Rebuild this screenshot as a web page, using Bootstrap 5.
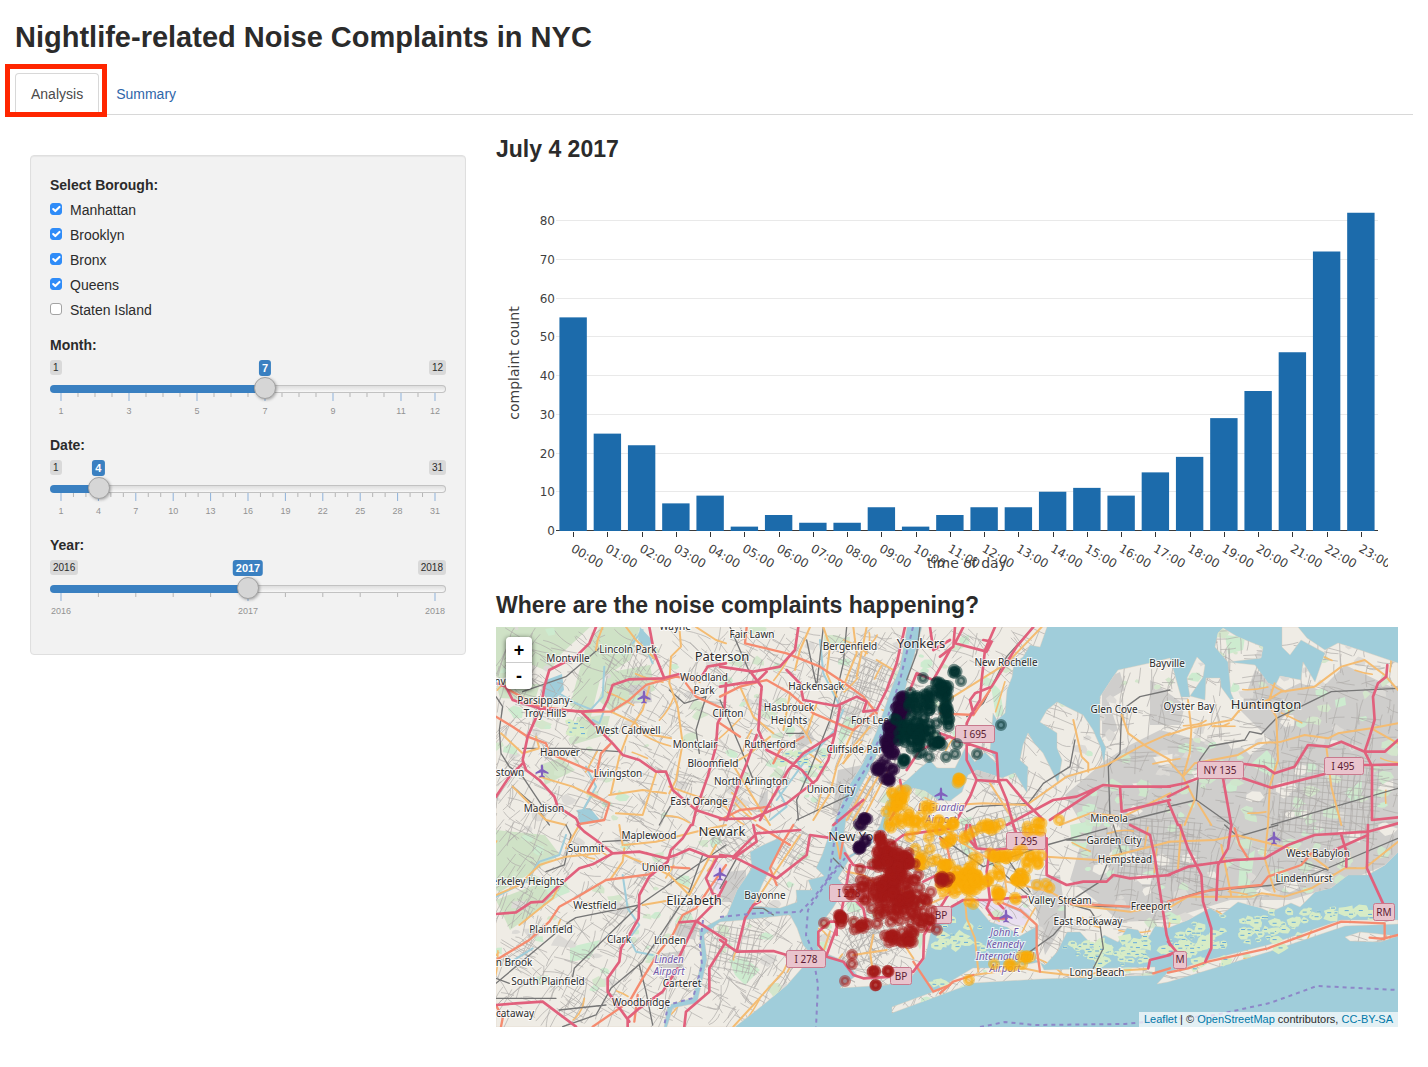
<!DOCTYPE html>
<html lang="en">
<head>
<meta charset="utf-8">
<meta name="viewport" content="width=device-width, initial-scale=1">
<title>Nightlife-related Noise Complaints in NYC</title>
<link href="https://cdn.jsdelivr.net/npm/bootstrap@5.3.0/dist/css/bootstrap.min.css" rel="stylesheet">
<style>
  :root { --ink:#2b2b2b; --brand:#3a80c1; --link:#2f66a9; }
  body { font-family:"Liberation Sans",Arial,sans-serif; font-size:14px; line-height:20px; color:var(--ink); }
  .page, .page .row, .page .inner { --bs-gutter-x:30px; }
  h1 { font-size:29px; line-height:33px; font-weight:700; margin:21px 0 19px; }
  h2 { font-size:23px; line-height:28px; font-weight:700; margin:20px 0 8px; }
  .nav-tabs { --bs-nav-tabs-border-color:#d8d8d8; --bs-nav-tabs-border-radius:4px; --bs-nav-tabs-link-active-color:#4a4a4a; --bs-nav-tabs-link-active-border-color:#d8d8d8 #d8d8d8 #fff; --bs-nav-link-padding-x:15px; --bs-nav-link-padding-y:10px; --bs-nav-link-color:var(--link); gap:1px; }
  .highlighted::after { content:""; position:absolute; inset:-9px -8px -3px -10px; border:5px solid #ff2600; pointer-events:none; z-index:2; }
  .well { background:#f2f2f2; border:1px solid #dfdfdf; border-radius:4px; padding:19px; margin-top:40px; box-shadow:inset 0 1px 1px rgba(0,0,0,.05); }
  .boroughs { margin-bottom:15px; }
  .group-title { display:block; font-weight:700; font-size:14px; line-height:20px; margin:0 0 5px; float:none; }
  .borough { min-height:20px; padding-left:20px; margin:0 0 5px; }
  .borough .form-check-input { width:12px; height:12px; margin:3px 0 0 -20px; border-color:#a3a3a3; border-radius:3px; }
  .borough .form-check-input:checked { background-color:#2f8cf8; border-color:#2f8cf8; background-size:14px; }
  .slider { margin-bottom:15px; height:60px; }
  .bounds { position:relative; height:17px; font-size:10px; line-height:15px; }
  .bounds span { background:#d9d9d9; border-radius:3px; padding:0 3px; height:15px; }
  .bounds output { position:absolute; top:0; left:calc(11px + (100% - 22px) * var(--at)); transform:translateX(-50%); background:var(--brand); color:#fff; font-weight:700; font-size:11px; line-height:16px; padding:0 3px; border-radius:3px; }
  .slider input { -webkit-appearance:none; appearance:none; display:block; position:relative; z-index:1; width:100%; height:24px; margin:0; background:none; }
  .slider input::-webkit-slider-runnable-track { height:8px; border:1px solid transparent; border-radius:8px; background:linear-gradient(var(--brand),var(--brand)) 0 0/calc(11px + (100% - 22px) * var(--at)) 100% no-repeat border-box, linear-gradient(#dedede,#f8f8f8) padding-box, linear-gradient(#c2c2c2,#c2c2c2) border-box; }
  .slider input::-webkit-slider-thumb { -webkit-appearance:none; width:22px; height:22px; margin-top:-9px; border:1px solid #a2a2a2; border-radius:50%; background:#d6d6d6; box-shadow:1px 1px 3px rgba(0,0,0,.3); }
  .ticks { display:block; width:calc(100% - 22px); height:27px; margin:-8px 11px 0; overflow:visible; font-size:9px; fill:#929292; }
  .chart { display:block; width:calc(100% - 10px); height:400px; font-family:"DejaVu Sans",Verdana,sans-serif; font-size:12px; fill:#3f3f3f; }
  .mapbox { position:relative; height:400px; overflow:hidden; background:#a0cdda; }
  .mapbox > svg { display:block; width:100%; height:100%; font-family:"Noto Sans",sans-serif; }
  .zoomer { position:absolute; top:10px; left:10px; width:26px; border-radius:4px; box-shadow:0 1px 5px rgba(0,0,0,.65); overflow:hidden; }
  .zoomer button { width:26px; height:26px; padding:0; border:0; border-radius:0; background:#fff; color:#000; font-size:18px; font-weight:700; line-height:26px; }
  .zoomer button:first-child { border-bottom:1px solid #ccc; }
  .credit { position:absolute; right:0; bottom:0; padding:0 5px; font-size:11px; line-height:15px; background:rgba(255,255,255,.7); }
  .credit a { color:#0078a8; text-decoration:none; }
  .land { fill:#efece5; stroke:#dccdb8; stroke-width:.4; }
  .urban { fill:#cfcecc; } .wood { fill:#cfe2c6; } .park { fill:#cdebcf; } .water { fill:#a0cdda; }
  .river, .mw, .tr, .pr, .rl, .minor { fill:none; stroke-linejoin:round; stroke-linecap:round; }
  .river { stroke:#a0cdda; stroke-width:6; } .mw { stroke:#e1607c; stroke-width:8; } .tr { stroke:#f58b6f; stroke-width:7; }
  .pr { stroke:#f4bc72; stroke-width:6; } .rl { stroke:#767676; stroke-width:4; } .minor { stroke:#b0adab; stroke-width:.7; }
  .town text, .air text { font-size:10px; text-anchor:middle; fill:#2c2c2c; paint-order:stroke; stroke:#fff; stroke-opacity:.75; stroke-width:2px; }
  .town .city { font-size:13px; }
  .air text { fill:#7058a8; font-style:italic; }
  .shield rect { fill:#e9c4cd; stroke:#c8798d; } .shield text { font-size:10px; text-anchor:middle; fill:#5c1c33; }
  .ferry { fill:none; stroke:#8d87c8; stroke-width:2; stroke-dasharray:4 4; }
</style>
</head>
<body>
<div class="container-fluid page">
  <h1>Nightlife-related Noise Complaints in NYC</h1>
  <ul class="nav nav-tabs">
    <li class="nav-item position-relative highlighted"><a class="nav-link active" aria-current="page" href="#analysis">Analysis</a></li>
    <li class="nav-item"><a class="nav-link" href="#summary">Summary</a></li>
  </ul>
  <main class="container-fluid inner" id="analysis">
    <div class="row">
      <div class="col-4">
        <form class="well">
          <fieldset class="boroughs">
            <legend class="group-title">Select Borough:</legend>
            <div class="form-check borough"><input class="form-check-input" type="checkbox" id="b1" checked><label for="b1">Manhattan</label></div>
            <div class="form-check borough"><input class="form-check-input" type="checkbox" id="b2" checked><label for="b2">Brooklyn</label></div>
            <div class="form-check borough"><input class="form-check-input" type="checkbox" id="b3" checked><label for="b3">Bronx</label></div>
            <div class="form-check borough"><input class="form-check-input" type="checkbox" id="b4" checked><label for="b4">Queens</label></div>
            <div class="form-check borough mb-0"><input class="form-check-input" type="checkbox" id="b5"><label for="b5">Staten Island</label></div>
          </fieldset>
          <label class="group-title" for="month">Month:</label>
          <div class="slider" data-major="1,3,5,7,9,11,12" data-minor="0.5">
            <div class="bounds d-flex justify-content-between"><span>1</span><span>12</span><output for="month">7</output></div>
            <input type="range" id="month" min="1" max="12" value="7"><svg class="ticks"></svg>
          </div>
          <label class="group-title" for="day">Date:</label>
          <div class="slider" data-major="1,4,7,10,13,16,19,22,25,28,31" data-minor="1">
            <div class="bounds d-flex justify-content-between"><span>1</span><span>31</span><output for="day">4</output></div>
            <input type="range" id="day" min="1" max="31" value="4"><svg class="ticks"></svg>
          </div>
          <label class="group-title" for="year">Year:</label>
          <div class="slider" data-major="2016,2017,2018" data-minor="0.2">
            <div class="bounds d-flex justify-content-between"><span>2016</span><span>2018</span><output for="year">2017</output></div>
            <input type="range" id="year" min="2016" max="2018" value="2017"><svg class="ticks"></svg>
          </div>
        </form>
      </div>
      <div class="col-8">
        <h2>July 4 2017</h2>
        <svg class="chart" id="chart" role="img" aria-label="Complaint count by time of day"></svg>
        <h2>Where are the noise complaints happening?</h2>
        <div class="mapbox">
          <svg viewBox="496 627 902 400" preserveAspectRatio="xMidYMid slice" role="img" aria-label="Map of noise complaints">
            <defs>
              <clipPath id="landclip"><use href="#landshape"/></clipPath>
              <path id="plane" d="M0-6.500C1-6.500 1.200-5 1.200-3.500L1.200-1.800 6.500 1.500V3L1.200 1.500 .9 4.200 2.800 5.600V6.600L0 5.900-2.800 6.600V5.600L-.9 4.200-1.200 1.500-6.500 3V1.500L-1.200-1.800V-3.500C-1.200-5-1-6.500 0-6.500Z" fill="#8160bd"/>
            </defs>
            <rect class="water" x="496" y="627" width="902" height="400"/>
            <path class="land" id="landshape" d="M496 627H907L900 667 892 687 877 730 863 763 848 787 835 820 829 835 822 855 816 868 824 876 808 880 812 890 796 890 797 902 780 908 753 906 762 885 770 868 783 845 779 838 763 845 750 852 752 868 737 890 727 915 699 930 702 958 693 998 668 1005 664 1027H496Z
              M720 922 744 920 770 917 790 915 797 928 803 945 810 953 802 968 787 985 763 1005 735 1027H667L673 1008 697 1003 707 960 704 935Z
              M922 627H1047L1040 647 1030 645 1023 657 1014 663 1012 677 1007 690 1005 713 997 720 993 713 990 750 998 765 985 752 975 762 965 748 955 768 937 768 930 760 920 768 907 780 898 787 888 800 880 825 868 845 848 856 843 842 847 812 867 775 885 738 905 690Z
              M885 832 893 805 913 788 925 791 938 800 950 801 962 792 968 775 977 770 1002 778 1015 773 1027 793 1028 767 1020 760 1023 745 1028 733 1034 743 1043 753 1058 783 1062 760 1057 748 1057 733 1040 722 1047 710 1057 702 1083 715 1093 730 1100 746 1104 764 1106 748 1100 735 1100 697 1113 677 1118 670 1150 663 1170 658 1181 697 1190 697 1187 678 1197 657 1205 665 1203 677 1190 696 1205 700 1206 678 1220 678 1221 687 1240 713 1231 693 1228 662 1215 647 1218 633 1223 628 1238 637 1263 647 1261 658 1228 662 1255 665 1268 683 1275 686 1280 676 1301 680 1303 662 1315 682 1325 653 1301 640 1290 655 1282 647V627H1298L1307 638 1325 650 1338 643 1360 650 1398 663V852L1385 865 1368 875 1348 875 1331 888 1315 892 1300 907 1291 903 1270 912 1261 908 1238 902 1221 915 1210 908 1188 920 1168 928 1155 926 1146 942 1138 930 1127 928 1118 942 1104 935 1094 947 1080 932 1067 932 1057 952 1045 965 1036 960 1039 925 1020 936 1007 927 990 922 975 904 960 902 940 915 933 922 925 958 913 975 887 985 840 988 857 975 847 962 830 955 818 948 818 928 833 908 845 888 838 878 850 858 870 845Z
              M892 1007 933 992 973 968 1007 968 1040 962 1044 970 1155 967 1155 975 1040 979 973 983 892 1013Z
              M1157 984 1168 972 1208 960 1268 945 1341 920 1398 920V924L1345 926 1268 952 1168 982Z M1345 937 1360 932 1398 936 1380 942 1350 941Z"/>
            <g clip-path="url(#landclip)">
              <path class="wood" d="M496 627H590L560 655 550 672 530 664 500 680 496 676ZM496 684 540 684 535 700 500 698ZM600 627H640L630 660 600 680 590 720 570 705 585 650ZM610 672 650 665 655 690 612 712 598 700ZM496 830 545 835 560 855 500 892 496 890ZM496 900 548 880 560 895 510 930ZM540 765 560 758 575 770 545 785ZM577 717 610 716 605 735 572 745Z"/>
              <path class="urban" d="M1102 680 1120 672 1125 690 1108 700 1118 730 1102 738ZM1106 760 1130 745 1160 730 1180 735 1215 745 1235 740 1250 755 1270 740 1240 710 1255 670 1285 690 1300 683 1320 690 1345 665 1398 690V860L1330 888 1290 900 1230 900 1165 920 1120 922 1095 900 1070 880 1085 830 1065 795ZM1030 880 1060 875 1066 920 1045 955 1038 920ZM1150 680 1185 705 1180 725 1150 725ZM975 770 995 770 995 785 975 780ZM726 872 746 870 746 902 720 902ZM675 925 700 920 695 940 675 935ZM655 955 685 950 683 968 660 968ZM795 735 808 728 815 740 800 750ZM760 795 768 790 767 810 758 812ZM630 685 650 685 652 702 628 704ZM838 770 862 765 858 810 832 815Z"/>
              <path class="park" d="M1225 635 1245 637 1243 650 1228 654ZM1250 765 1267 750 1278 765 1270 776ZM1350 790 1362 780 1361 800 1350 802ZM1240 860 1255 850 1250 885 1238 888ZM1070 825 1095 820 1085 850 1072 845ZM729 960 745 958 760 970 745 985 735 975ZM570 947 600 940 590 958 570 962ZM990 680 1000 690 1004 715 996 717ZM846 900 860 900 860 912 848 912ZM840 730 852 705 855 725 838 750ZM912 930 925 935 920 950ZM545 886 565 880 570 892 550 900ZM1335 700 1345 697 1346 705 1336 708Z"/>
              <path class="water" d="M546 680 562 674 564 690 550 704 543 692ZM640 627 652 640 648 650 638 640ZM577 810 590 808 600 820 580 824Z"/>
              <path fill="#e9dff0" d="M978 900 1000 898 1030 910 1028 925 1000 927ZM714 860 730 870 720 895 712 885Z"/>
              <g id="patches"></g><g id="streets" class="minor"></g>
            </g>
            <g id="marsh"></g>
            <g transform="translate(496 620) scale(.3333)">
              <path class="river" d="M325 140 320 230 285 268 240 250 180 215M430 40 470 130M290 300 310 310 325 270M270 440 300 500 250 590M440 30 410 70"/>
              <path class="rl" d="M0 230 20 260 10 330 15 400 40 440 80 470 140 560M80 385H220L370 395M310 85 210 170 80 215M520 210 565 250 630 230 600 330 610 400M540 530 490 615M50 500 120 560 160 615"/>
              <path class="pr" d="M390 21 420 60 475 115M550 21 555 80 525 110 520 190 545 260 560 370 540 480 520 520M345 275 420 310 440 340 525 355M600 21 660 60 690 70M320 21 305 60 300 90M130 470 230 500 330 545M460 200 440 270 400 330 370 410 345 520M340 525 440 510 510 520M50 500 120 570 150 600 210 615M520 500 690 560M360 580 440 585 480 460M15 340 80 400 130 385 120 350"/>
              <path class="tr" d="M30 205 130 260 250 275H345L400 240 450 195 540 170 600 180M345 370 315 400 300 470 275 515 340 550 325 600 250 612M0 290 50 320 95 350 150 370 160 400 290 455M570 190 600 230 690 270"/>
              <path class="mw" d="M300 21 280 70 240 110 160 150 145 200 135 260 95 350 80 420 90 450 130 480 175 530 185 560 240 595 250 615M0 190 30 200 50 240 130 265 260 275 320 270 335 240 350 195 400 178 500 175 550 162M460 21 475 100 505 175M0 530 40 470 80 430M255 275 290 310 350 370 380 405 430 420 480 455 510 455 530 510 600 570 690 600M620 165 635 140 690 130M690 190 685 270 665 310 660 380 635 470 600 570 590 615"/>
            </g>
            <g transform="translate(496 825) scale(.3333)">
              <path class="river" d="M210 30 190 90 130 110 90 170 0 215M380 150 395 250 430 300 400 340 420 380 470 390M30 420 110 370"/>
              <path class="rl" d="M0 475 220 290 240 278 430 240 690 60M620 90 580 200 440 410 345 490 300 570 200 605M320 50 400 45M230 455 235 430 430 240M210 0 225 30 205 120 150 140M0 520H180M190 555 330 540M430 420 450 500 470 600M0 460 40 475"/>
              <path class="pr" d="M0 210 70 180 130 120 210 95 310 85M210 70 250 0M385 60 480 50 600 20 690 0M385 70 380 110 345 160M70 300 170 220 190 180M440 240 510 228M385 90 480 130 520 150 580 210 660 60M370 0 380 60"/>
              <path class="tr" d="M0 405 100 345 160 290 190 245 250 212 330 165 460 148 500 125 580 130M690 120 640 190 600 250 560 270 530 330 490 380 440 460 400 530 290 605M0 540 20 580 15 605M425 510 415 590"/>
              <path class="mw" d="M245 0 265 20 300 45 350 85M0 267 60 262 105 232 140 230 180 190 250 130 290 118 350 85 430 80 510 100 540 90 580 72 640 95H690M585 0 560 40 525 75 515 110 460 155 430 210 428 280 400 330 375 370 370 410 335 460V500L400 590M690 170 660 230 600 290 550 395M545 430 500 500 430 550 395 580V605M550 292 600 288 690 345M0 540 60 535 140 530 240 605M690 350 640 430 640 500 570 560 565 605M665 95 630 160 650 205 670 215"/>
            </g>
            <g transform="translate(720 620) scale(.3333)">
              <path class="river" d="M370 270 345 330 300 380 230 420 260 480M300 60 310 160 360 260M170 500 200 560 150 600M250 430 170 540"/>
              <path class="rl" d="M600 21 590 100 560 180M260 60 290 200 310 21M380 21 370 130 330 300 270 450 230 540 235 600M0 240 60 380 100 480M230 600 400 520M250 340H200M90 160 30 21"/>
              <path class="pr" d="M270 21 240 90 225 150M310 21 330 80 320 160 350 230M400 21 410 100 370 200M440 21 410 170M470 120 520 150M60 200 100 290 160 340M150 350 90 400 40 430M210 220 190 330M290 250 260 340M400 330 350 440 330 520 280 600M450 320 400 380 370 430M30 420 150 615M450 470 380 600M510 440 420 615M480 460 400 600"/>
              <path class="tr" d="M80 21 75 70 200 100 300 140 360 180 430 230 470 280M0 230 60 200 140 180 210 220 280 280 400 330 460 280M0 310 60 350M250 350 180 390 160 430M0 600 60 570 150 560"/>
              <path class="mw" d="M235 21 225 90 180 140 100 155 0 140M0 200 60 190 110 185 140 155M95 160 125 200 120 260 115 330 140 390 200 420 245 450 280 490M200 150 240 190 250 240 350 258 410 230 440 245 430 275 470 270 500 210 530 130 555 21M360 260 345 340 250 400 205 450 120 600M110 345 80 430 60 480 20 600M0 597 100 595 200 550 290 480 325 420 345 340M690 90 640 180 590 160 570 210M690 60 640 90 630 21M540 480 550 530 510 600M430 540 340 615M560 450 600 390 690 350"/>
            </g>
            <g transform="translate(720 825) scale(.3333)">
              <path class="rl" d="M50 100 0 190M90 250 130 250 160 270M460 130 560 130M370 130 340 100"/>
              <path class="pr" d="M40 605 100 540 190 440 210 400M240 30 100 240M360 100 350 50M380 140 430 150 500 200M460 330 450 380 460 450M400 390 500 375M540 340 580 400M330 320 310 380M620 240 690 210"/>
              <path class="tr" d="M110 0 210 60M170 180 150 130 190 50 220 0M580 410 640 500 690 480M370 40 360 100"/>
              <path class="mw" d="M0 90 40 95 110 25 240 15M40 95 170 160 260 90 270 30 340 40M100 0 110 50 40 100M0 345 50 380 160 378 200 390M50 380 75 280 100 240 120 230M200 395 320 395 370 410 400 450 430 460 520 455 580 440 610 400 612 330 690 200M350 330V290L330 290 295 320V360L320 390M390 120 370 230 360 280 320 390M375 85 400 120 460 130 510 60 550 30 690 10M390 210 430 250 440 300M610 170 690 130"/>
            </g>
            <g transform="translate(940 620) scale(.3333)">
              <path class="rl" d="M280 21 200 110 130 250 80 290M80 575 110 560 265 550 310 490 390 440 405 360M690 210 600 230 545 270 540 400 505 440 510 590M570 600 690 570"/>
              <path class="pr" d="M305 21 200 130 40 230 0 260M400 300 425 410 445 430V455M40 555 130 550 260 555 380 470 500 435 600 380 690 340M545 285 565 340 620 380 690 420M150 490 220 600M360 615 450 580 550 590 690 520"/>
              <path class="tr" d="M0 280 100 285 150 210"/>
              <path class="mw" d="M70 21 45 70 140 95 155 65 130 60M0 110 40 80 45 21M165 21 135 90 125 180 120 240 95 280 80 310V420L110 480 90 530 50 600M230 80 205 120 155 200 105 220 90 240 100 280M280 21 230 80M0 340 80 370 170 400 175 480 200 480 250 540 310 600M175 480 200 540 220 615M110 480 175 485M200 615 340 540 410 530 490 495 545 500H690M330 600 480 500M540 500 545 575 690 540"/>
            </g>
            <g transform="translate(940 825) scale(.3333)">
              <path class="rl" d="M0 35 130 125 320 60 500 10M160 120 265 210M205 105 270 200M375 235V290L340 330 270 380M500 120 480 170 380 235 450 255 480 300 490 370 460 430M380 45H440M520 0 545 85M570 245H440"/>
              <path class="pr" d="M75 225 80 280 105 340 115 440M100 450 250 430 300 440 430 455 480 440 620 432M0 215 60 200M160 110 200 170 330 200 400 240 570 260 690 240M200 200 190 130M320 95 470 105 690 50M0 0 60 50 160 110"/>
              <path class="tr" d="M0 110 30 105 20 60 0 40M190 235 240 255 290 300V370L300 440M0 505 40 470 100 450M380 235 570 245M640 445 690 430"/>
              <path class="mw" d="M90 0 110 70 160 75 320 60M80 0 75 30 110 70M220 0 245 70M320 40V150L380 180 430 170 500 170 520 150 570 160 690 150M570 0 630 30 645 100 660 200 680 330 690 360M35 245 70 225 150 225 260 215M150 75 140 140 150 225 140 250 160 280H200M175 235 190 250M625 430 630 405 690 390"/>
            </g>
            <g transform="translate(1168 620) scale(.3333)">
              <path class="rl" d="M0 560 85 540 95 420 125 378 230 360 245 335 280 342 325 295 490 215 690 205M310 615 690 505M85 540 190 615"/>
              <path class="pr" d="M0 345 60 325 190 300 215 270 300 240 340 215 440 200 520 140 590 120 650 165 690 210M60 240 70 330 65 400 45 470 80 540 50 615M45 470 80 430 210 405 270 370 340 365 410 345 480 355 510 340 610 325 690 310M610 325 690 370M320 190 300 250 325 290 330 420 305 500 300 615M475 380 490 500 520 615M0 420 45 470M90 550 130 615"/>
              <path class="mw" d="M230 432 290 440 320 460 380 440 420 375 480 380 520 365 590 395 610 435 690 433M658 135 655 170 630 190 615 230 620 300 605 350 590 395 650 395 690 360M0 500 50 490 90 475M225 475 310 503 470 462M165 475 190 615M0 530 60 500M0 545 30 615M612 435V600L690 592M580 435H610"/>
            </g>
            <g transform="translate(1168 825) scale(.3333)">
              <path class="rl" d="M0 230 100 200 320 180 430 150 690 40M170 0 210 35 330 0M400 110 480 135"/>
              <path class="pr" d="M0 50 140 45 210 30M40 0 30 130M160 60 190 215M0 250 60 215 250 215 280 205 350 215 430 190 530 130 590 130 690 50M300 0 290 100 320 200M205 30 420 85 480 130"/>
              <path class="tr" d="M0 230 130 195 280 180 300 155 400 120 430 85M200 10 215 60 240 100M0 443 60 430 120 410 300 370 520 290 650 295V340L690 330M605 338 650 342"/>
              <path class="mw" d="M35 0 60 70 100 150 105 230 130 310V370L112 410M190 0 180 70 150 120 145 225M0 150 60 125 200 105 290 100 360 60 440 30 600 20 690 -5M520 30 535 80V125M600 0 597 130 645 235M0 350 25 380 0 390M500 75 600 30"/>
            </g>
            <path class="ferry" d="M913 627 900 680 885 725 868 765 852 790 838 815 833 850 828 880 808 910 806 935 812 950 818 985 816 1027M720 917 760 913 800 912 812 900 840 862M829 880 845 858M703 920 700 945 702 965 693 998 668 1005 664 1027"/>
            <path class="ferry" d="M980 1027 1005 1022 1035 1025 1125 1024 1215 1015 1270 1003 1317 986 1398 990"/>
            <g class="town">
              <text x="675" y="630">Wayne</text><text x="568" y="662">Montville</text><text x="628" y="653">Lincoln Park</text><text x="752" y="638">Fair Lawn</text>
              <text class="city" x="722" y="661">Paterson</text><text x="850" y="650">Bergenfield</text><text class="city" x="921" y="648">Yonkers</text><text x="1006" y="666">New Rochelle</text>
              <text x="1167" y="667">Bayville</text><text x="704" y="681">Woodland</text><text x="704" y="694">Park</text><text x="816" y="690">Hackensack</text>
              <text x="545" y="704">Parsippany-</text><text x="545" y="717">Troy Hills</text><text x="789" y="711">Hasbrouck</text><text x="789" y="724">Heights</text>
              <text x="728" y="717">Clifton</text><text x="870" y="724">Fort Lee</text><text x="1114" y="713">Glen Cove</text><text x="1189" y="710">Oyster Bay</text>
              <text class="city" x="1266" y="709">Huntington</text><text x="628" y="734">West Caldwell</text><text x="695" y="748">Montclair</text><text x="770" y="748">Rutherford</text>
              <text x="857" y="753">Cliffside Park</text><text x="560" y="756">Hanover</text><text x="713" y="767">Bloomfield</text><text x="510" y="776">stown</text>
              <text x="618" y="777">Livingston</text><text x="751" y="785">North Arlington</text><text x="831" y="793">Union City</text><text x="544" y="812">Madison</text>
              <text x="699" y="805">East Orange</text><text x="1109" y="822">Mineola</text><text class="city" x="722" y="836">Newark</text><text class="city" x="857" y="841">New York</text>
              <text x="649" y="839">Maplewood</text><text x="586" y="852">Summit</text><text x="1114" y="844">Garden City</text><text x="1125" y="863">Hempstead</text>
              <text x="1318" y="857">West Babylon</text><text x="656" y="871">Union</text><text x="528" y="885">erkeley Heights</text><text x="1304" y="882">Lindenhurst</text>
              <text class="city" x="694" y="905">Elizabeth</text><text x="765" y="899">Bayonne</text><text x="595" y="909">Westfield</text><text x="1060" y="904">Valley Stream</text>
              <text x="1151" y="910">Freeport</text><text x="1088" y="925">East Rockaway</text><text x="551" y="933">Plainfield</text><text x="619" y="943">Clark</text>
              <text x="670" y="944">Linden</text><text x="514" y="966">n Brook</text><text x="548" y="985">South Plainfield</text><text x="682" y="987">Carteret</text>
              <text x="641" y="1006">Woodbridge</text><text x="515" y="1017">cataway</text><text x="1097" y="976">Long Beach</text><text x="500" y="685">nv</text>
            </g>
            <g class="air">
              <text x="669" y="963">Linden</text><text x="669" y="975">Airport</text><text x="941" y="811">LaGuardia</text><text x="941" y="823">Airport</text>
              <text x="1005" y="936">John F.</text><text x="1005" y="948">Kennedy</text><text x="1005" y="960">International</text><text x="1005" y="972">Airport</text>
              <use href="#plane" x="644" y="697"/><use href="#plane" x="542" y="771"/><use href="#plane" x="720" y="874"/><use href="#plane" x="941" y="794"/><use href="#plane" x="1006" y="916"/><use href="#plane" x="1274" y="838"/>
            </g>
            <g class="shield">
              <rect x="955.500" y="725.500" width="39" height="17" rx="2"/><text x="975" y="738">I 695</text>
              <rect x="1197.500" y="761.500" width="46" height="17" rx="2"/><text x="1220" y="774">NY 135</text>
              <rect x="1324.500" y="757.500" width="39" height="17" rx="2"/><text x="1343" y="770">I 495</text>
              <rect x="1006.500" y="832.500" width="39" height="17" rx="2"/><text x="1026" y="845">I 295</text>
              <rect x="829.500" y="884.500" width="39" height="17" rx="2"/><text x="849" y="897">I 278</text>
              <rect x="786.500" y="950.500" width="39" height="17" rx="2"/><text x="806" y="963">I 278</text>
              <rect x="931.500" y="906.500" width="20" height="17" rx="2"/><text x="941" y="919">BP</text>
              <rect x="890.500" y="967.500" width="21" height="17" rx="2"/><text x="901" y="980">BP</text>
              <rect x="1173.500" y="951.500" width="13" height="17" rx="2"/><text x="1180" y="963">M</text>
              <rect x="1373.500" y="903.500" width="21" height="17" rx="2"/><text x="1384" y="916">RM</text>
            </g>
            <g id="markers"></g>
          </svg>
          <div class="zoomer"><button class="btn d-block" type="button" aria-label="Zoom in">+</button><button class="btn d-block" type="button" aria-label="Zoom out">-</button></div>
          <div class="credit"><a href="#leaflet">Leaflet</a> | © <a href="#osm">OpenStreetMap</a> contributors, <a href="#license">CC-BY-SA</a></div>
        </div>
      </div>
    </div>
  </main>
</div>
<script src="https://cdn.jsdelivr.net/npm/bootstrap@5.3.0/dist/js/bootstrap.bundle.min.js"></script>
<script>
// Sliders: fill, value bubble and tick scale
document.querySelectorAll('.slider').forEach(s => {
  const input = s.querySelector('input'), out = s.querySelector('output');
  const lo = +input.min, span = input.max - lo, step = +s.dataset.minor;
  const major = s.dataset.major.split(',').map(Number);
  let g = '';
  for (let i = 0; i * step <= span + .001; i++) {
    const p = i * step / span * 100;
    if (!major.includes(+(lo + i * step).toFixed(2))) g += `<line x1="${p}%" x2="${p}%" y1="0" y2="4" stroke="#b5b5b5"/>`;
  }
  major.forEach(v => {
    const p = (v - lo) / span * 100;
    g += `<line x1="${p}%" x2="${p}%" y1="0" y2="8" stroke="#8db1da"/><text x="${p}%" y="21" text-anchor="middle">${v}</text>`;
  });
  s.querySelector('.ticks').innerHTML = g;
  const update = () => { s.style.setProperty('--at', (input.value - lo) / span); out.textContent = input.value; };
  input.addEventListener('input', update); update();
});

// Bar chart
const counts = [55,25,22,7,9,1,4,2,2,6,1,4,6,6,10,11,9,15,19,29,36,46,72,82];
function drawChart() {
  const svg = document.getElementById('chart'), w = svg.clientWidth, L = 60, R = w - 10, zero = 359.5, k = 3.875, step = (R - L) / 24;
  let h = '';
  for (let v = 0; v <= 80; v += 10) {
    const y = Math.floor(zero - v * k) + .5;
    if (v) h += `<line x1="${L}" x2="${R}" y1="${y}" y2="${y}" stroke="#e9e9e9"/>`;
    h += `<text x="59" y="${y + 4.5}" text-anchor="end">${v}</text>`;
  }
  h += `<line x1="${L}" x2="${R}" y1="359.5" y2="359.5" stroke="#3a3a3a"/>`;
  counts.forEach((c, i) => {
    const x = L + step * (i + .5), t = Math.round(x) + .5;
    h += `<rect x="${x - step * .4}" y="${zero - c * k}" width="${step * .8}" height="${c * k + .5}" fill="#1c6bab"/>
      <line x1="${t}" x2="${t}" y1="361" y2="366" stroke="#333"/>
      <text transform="translate(${x - 3} 380) rotate(30)">${String(i).padStart(2, '0')}:00</text>`;
  });
  h += `<text x="${(L + R) / 2}" y="397" text-anchor="middle" font-size="14">time of day</text>
    <text transform="translate(23 192) rotate(-90)" text-anchor="middle" font-size="14">complaint count</text>`;
  svg.innerHTML = h;
}
drawChart(); addEventListener('resize', drawChart);

// Repeatable random numbers for map texture and complaint markers
let seed = 7;
const rnd = () => (seed = (seed * 16807) % 2147483647) / 2147483647;
const around = r => (rnd() + rnd() - 1) * r;
let s = '', p = '';
for (let i = 0; i < 3000; i++) {
  const west = rnd() < .5, x = west ? 496 + rnd() * 410 : 840 + rnd() * 558, y = 627 + rnd() * 390;
  const a = (x > 1060 ? .15 : .55) + (rnd() < .5 ? 1.57 : 0) + around(.5), l = 10 + rnd() * 22;
  const dx = Math.cos(a) * l, dy = Math.sin(a) * l;
  const d = `M${x.toFixed(1)} ${y.toFixed(1)}q${(dx / 2 + around(5)).toFixed(1)} ${(dy / 2 + around(5)).toFixed(1)} ${dx.toFixed(1)} ${dy.toFixed(1)}`;
  if (i % 30) s += d; else p += d;
}
// dense city grids: centre x, y, half width, half height, angle
[[738,838,22,14,-35],[862,790,10,34,28],[880,930,32,26,-20],[905,865,30,20,25],[795,850,14,20,30],[960,850,40,20,-15],[925,730,22,26,20],[1160,850,40,30,5],[1330,800,50,35,5],[1000,830,35,18,-15],[735,950,25,22,10],[860,700,20,40,20]].forEach(([x, y, w, h, a]) => {
  const c = Math.cos(a * Math.PI / 180), n = Math.sin(a * Math.PI / 180);
  for (let u = -w; u <= w; u += 6) s += `M${(x + u * c + h * n).toFixed(1)} ${(y + u * n - h * c).toFixed(1)}l${(-2 * h * n).toFixed(1)} ${(2 * h * c).toFixed(1)}`;
  for (let v = -h; v <= h; v += 7) s += `M${(x - w * c - v * n).toFixed(1)} ${(y - w * n + v * c).toFixed(1)}l${(2 * w * c).toFixed(1)} ${(2 * w * n).toFixed(1)}`;
});
document.getElementById('streets').innerHTML = `<path d="${s}"/><path d="${p}" stroke="#f4bc72" stroke-width="1.6"/>`;
const blob = (x, y, r, f) => {
  let d = '';
  for (let i = 0; i < 7; i++) { const q = r * (.5 + rnd() * .7), t = i * .9; d += (i ? 'L' : 'M') + (x + Math.cos(t) * q * 1.4).toFixed(1) + ' ' + (y + Math.sin(t) * q).toFixed(1); }
  return `<path d="${d}Z" fill="${f}"/>`;
};
s = '';
for (let i = 0; i < 420; i++) s += blob(496 + rnd() * 902, 627 + rnd() * 380, 2 + rnd() * 5, ['#d4e6cc', '#cdebcf', '#dcdad6'][i % 3]);
for (let i = 0; i < 80; i++) s += blob(1080 + rnd() * 318, 720 + rnd() * 180, 3 + rnd() * 5, ['#efece5', '#cfe6cc'][i % 2]);
document.getElementById('patches').innerHTML = s;
// marshes: x, y, half width, half height, count
s = '';
[[955,940,22,18,16],[1095,952,42,11,34],[1150,950,30,14,26],[1195,942,28,24,40],[1265,930,32,14,34],[1320,916,28,8,18],[1365,912,16,6,8],[805,762,18,16,12],[575,730,14,12,8],[940,985,10,8,3]].forEach(([x, y, w, h, n]) => {
  for (let i = 0; i < n; i++) {
    const a = x + around(w * 1.3), b = y + around(h * 1.3);
    s += blob(a, b, 2 + rnd() * 4, '#d7ecc6') + `<path d="M${(a - 2).toFixed(1)} ${b.toFixed(1)}h4" stroke="#4698e0" stroke-width=".8"/>`;
  }
});
document.getElementById('marsh').innerHTML = s;

// Complaints: clusters as [x, y, rx, ry, count]; count 1 marks a single place
const places = {
  '#f9ab05': [[900,798,10,12,18],[893,808,8,8,6],[959,780,3,5,6],[903,820,16,10,12],[928,806,8,8,4],[925,832,20,18,12],[948,826,16,8,9],[990,826,16,5,10],[1059,820,0,0,1],[1040,828,8,10,5],[966,832,10,8,4],[968,880,34,14,85],[942,866,14,10,8],[1005,856,38,7,20],[1020,878,7,6,12],[999,896,4,5,7],[1037,885,0,0,1],[1046,886,6,4,2],[1035,858,10,14,9],[1028,830,12,6,3],[1026,958,6,5,5],[1011,965,16,3,4],[994,964,0,0,1],[969,980,0,0,1],[922,858,10,14,9],[970,902,4,3,2],[1015,899,4,3,2],[950,842,10,8,5]],
  '#a41917': [[893,882,24,36,105],[900,900,30,30,44],[882,853,12,18,24],[908,862,9,8,16],[893,863,14,16,22],[860,890,20,14,14],[842,918,5,9,10],[824,923,0,0,1],[864,925,14,8,9],[892,937,8,6,10],[906,938,14,9,16],[924,920,16,14,18],[945,881,9,6,9],[920,895,16,10,7],[852,955,0,0,1],[852,964,0,0,1],[845,981,0,0,1],[874,972,2,2,4],[888,971,1,1,3],[876,985,1,1,3],[860,869,0,0,1],[931,892,0,0,1],[880,838,4,8,4]],
  '#260637': [[903,704,7,12,24],[898,718,7,12,22],[892,734,7,12,24],[889,750,10,12,20],[884,768,18,6,14],[886,778,8,5,7],[865,818,3,3,6],[861,825,4,3,3],[859,848,3,4,7],[866,841,4,4,3]],
  '#00302e': [[921,703,16,14,30],[911,732,18,18,46],[928,732,20,26,26],[946,712,4,22,18],[945,690,10,10,14],[956,671,3,4,4],[923,678,0,0,1],[961,681,0,0,1],[1001,725,0,0,1],[977,754,0,0,1],[957,744,0,0,1],[955,754,0,0,1],[946,757,0,0,1],[929,757,0,0,1],[903,761,3,3,5],[937,743,6,4,8],[937,685,8,6,5]]
};
s = '';
for (const [c, list] of Object.entries(places)) {
  s += `<g fill="${c}" fill-opacity=".4" stroke="${c}" stroke-opacity=".5" stroke-width="4">`;
  list.forEach(([x, y, rx, ry, n]) => { for (let i = 0; i < n; i++) s += `<circle cx="${(x + around(rx)).toFixed(1)}" cy="${(y + around(ry)).toFixed(1)}" r="4"/>`; });
  s += '</g>';
}
document.getElementById('markers').innerHTML = s;
</script>
</body>
</html>
